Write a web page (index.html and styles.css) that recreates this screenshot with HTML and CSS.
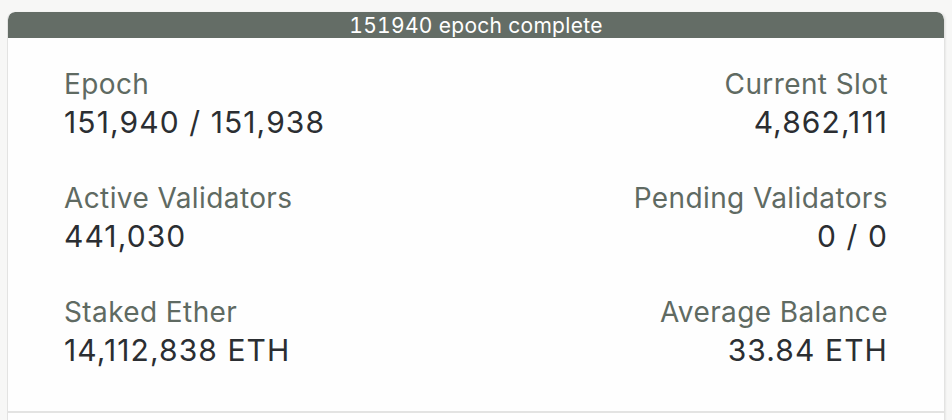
FILE: index.html
```html
<!DOCTYPE html>
<html>
<head>
<meta charset="utf-8">
<link rel="stylesheet" href="styles.css">
</head>
<body>
<div class="card">
  <div class="card-header">151940 epoch complete</div>
  <div class="stats">
    <div class="stat">
      <div class="label">Epoch</div>
      <div class="value">151,940 / 151,938</div>
    </div>
    <div class="stat right">
      <div class="label">Current Slot</div>
      <div class="value">4,862,111</div>
    </div>
    <div class="stat">
      <div class="label">Active Validators</div>
      <div class="value">441,030</div>
    </div>
    <div class="stat right">
      <div class="label">Pending Validators</div>
      <div class="value">0 / 0</div>
    </div>
    <div class="stat">
      <div class="label">Staked Ether</div>
      <div class="value">14,112,838 ETH</div>
    </div>
    <div class="stat right">
      <div class="label">Average Balance</div>
      <div class="value">33.84 ETH</div>
    </div>
  </div>
  <div class="card-footer"></div>
</div>
</body>
</html>
```
FILE: styles.css
```css
html, body {
  margin: 0;
  padding: 0;
}
body {
  background: #f7f7f6;
  padding: 12px 7px 0 7px;
  font-family: Inter, "Noto Sans", sans-serif;
}
.card {
  background: #fefefe;
  border: 1px solid #e3e3e2;
  border-top: none;
  border-radius: 8px 8px 0 0;
  box-shadow: 1px 0 2px rgba(0,0,0,0.06);
  overflow: hidden;
}
.card-header {
  background: #646d66;
  color: #ffffff;
  text-align: center;
  font-size: 21px;
  letter-spacing: 0.3px;
  font-feature-settings: "tnum";
  height: 26px;
  line-height: 28px;
  border-radius: 7px 7px 0 0;
}
.stats {
  display: grid;
  grid-template-columns: 1fr 1fr;
  row-gap: 38px;
  padding: 28px 56px 41px 56px;
  border-bottom: 2px solid #e3e3e2;
}
.stat.right {
  text-align: right;
}
.label {
  font-size: 28px;
  letter-spacing: 0.4px;
  line-height: 36px;
  color: #5f6a62;
}
.value {
  font-size: 30px;
  line-height: 40px;
  letter-spacing: 1.1px;
  color: #2b2e32;
}
.card-footer {
  height: 20px;
}
```
